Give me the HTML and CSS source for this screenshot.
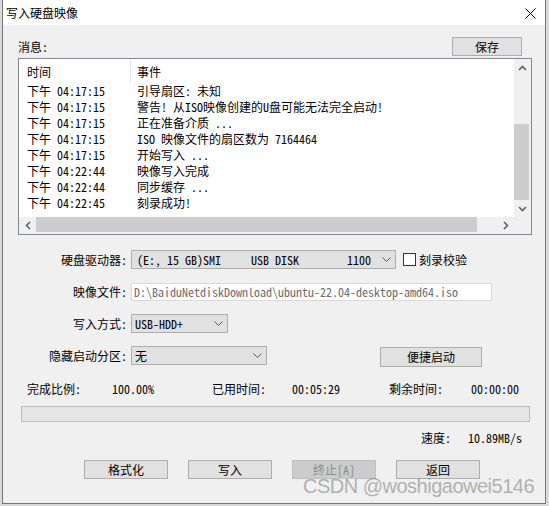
FILE: index.html
```html
<!DOCTYPE html>
<html lang="zh-CN">
<head>
<meta charset="utf-8">
<title>写入硬盘映像</title>
<link rel="stylesheet" href="styles.css">
</head>
<body>
<div class="window">
  <div class="titlebar">
    <span class="title">写入硬盘映像</span>
    <svg class="close" width="11" height="11" viewBox="0 0 11 11"><path d="M0.5 0.5 L10.5 10.5 M10.5 0.5 L0.5 10.5" stroke="#000" stroke-width="1" fill="none"/></svg>
  </div>

  <div class="msg-head">
    <span class="msg-label">消息<span class="m">:</span></span>
    <div class="btn save">保存</div>
  </div>

  <div class="listbox">
    <div class="list-view">
      <div class="list-header">
        <div class="col-time">时间</div>
        <div class="col-event">事件</div>
      </div>
      <div class="row"><div class="col-time">下午<span class="m"> 04:17:15</span></div><div class="col-event">引导扇区<span class="m">: </span>未知</div></div>
      <div class="row"><div class="col-time">下午<span class="m"> 04:17:15</span></div><div class="col-event">警告<span class="m">! </span>从<span class="m">ISO</span>映像创建的<span class="m">U</span>盘可能无法完全启动<span class="m">!</span></div></div>
      <div class="row"><div class="col-time">下午<span class="m"> 04:17:15</span></div><div class="col-event">正在准备介质<span class="m"> ...</span></div></div>
      <div class="row"><div class="col-time">下午<span class="m"> 04:17:15</span></div><div class="col-event"><span class="m">ISO </span>映像文件的扇区数为<span class="m"> 7164464</span></div></div>
      <div class="row"><div class="col-time">下午<span class="m"> 04:17:15</span></div><div class="col-event">开始写入<span class="m"> ...</span></div></div>
      <div class="row"><div class="col-time">下午<span class="m"> 04:22:44</span></div><div class="col-event">映像写入完成</div></div>
      <div class="row"><div class="col-time">下午<span class="m"> 04:22:44</span></div><div class="col-event">同步缓存<span class="m"> ...</span></div></div>
      <div class="row"><div class="col-time">下午<span class="m"> 04:22:45</span></div><div class="col-event">刻录成功<span class="m">!</span></div></div>
    </div>
    <div class="vscroll">
      <div class="sb-btn"><svg width="9" height="6" viewBox="0 0 9 6"><path d="M1 5 L4.5 1.5 L8 5" stroke="#606060" stroke-width="1.6" fill="none"/></svg></div>
      <div class="vtrack"><div class="vthumb"></div></div>
      <div class="sb-btn"><svg width="9" height="6" viewBox="0 0 9 6"><path d="M1 1 L4.5 4.5 L8 1" stroke="#606060" stroke-width="1.6" fill="none"/></svg></div>
    </div>
    <div class="hscroll">
      <div class="sb-btn"><svg width="6" height="9" viewBox="0 0 6 9"><path d="M5 1 L1.5 4.5 L5 8" stroke="#606060" stroke-width="1.6" fill="none"/></svg></div>
      <div class="htrack"><div class="hthumb"></div></div>
      <div class="sb-btn"><svg width="6" height="9" viewBox="0 0 6 9"><path d="M1 1 L4.5 4.5 L1 8" stroke="#606060" stroke-width="1.6" fill="none"/></svg></div>
    </div>
    <div class="corner"></div>
  </div>

  <div class="frow r1">
    <span class="flabel">硬盘驱动器<span class="m">:</span></span>
    <div class="select drive"><span class="m">(E:, 15 GB)SMI     USB DISK        1100</span><svg class="chev" width="9" height="5" viewBox="0 0 9 5"><path d="M0.5 0.5 L4.5 4.5 L8.5 0.5" stroke="#555" stroke-width="1" fill="none"/></svg></div>
    <span class="check"></span>
    <span class="check-label">刻录校验</span>
  </div>
  <div class="frow r2">
    <span class="flabel">映像文件<span class="m">:</span></span>
    <div class="input"><span class="m">D:\BaiduNetdiskDownload\ubuntu-22.04-desktop-amd64.iso</span></div>
  </div>
  <div class="frow r3">
    <span class="flabel">写入方式<span class="m">:</span></span>
    <div class="select mode"><span class="m">USB-HDD+</span><svg class="chev" width="9" height="5" viewBox="0 0 9 5"><path d="M0.5 0.5 L4.5 4.5 L8.5 0.5" stroke="#555" stroke-width="1" fill="none"/></svg></div>
  </div>
  <div class="frow r4">
    <span class="flabel">隐藏启动分区<span class="m">:</span></span>
    <div class="select hidden-part"><span>无</span><svg class="chev" width="9" height="5" viewBox="0 0 9 5"><path d="M0.5 0.5 L4.5 4.5 L8.5 0.5" stroke="#555" stroke-width="1" fill="none"/></svg></div>
    <div class="btn quick">便捷启动</div>
  </div>

  <div class="stats">
    <span class="s1">完成比例<span class="m">:</span></span>
    <span class="s2 m">100.00%</span>
    <span class="s3">已用时间<span class="m">:</span></span>
    <span class="s4 m">00:05:29</span>
    <span class="s5">剩余时间<span class="m">:</span></span>
    <span class="m">00:00:00</span>
  </div>

  <div class="progress"></div>

  <div class="speed">
    <span class="speed-label">速度<span class="m">:</span></span>
    <span class="m">10.89MB/s</span>
  </div>

  <div class="actions">
    <div class="btn act">格式化</div>
    <div class="btn act">写入</div>
    <div class="btn act disabled">终止<span class="m">[A]</span></div>
    <div class="btn act">返回</div>
  </div>

  <div class="watermark">CSDN @woshigaowei5146</div>
</div>
</body>
</html>
```

FILE: styles.css
```css
* { box-sizing: border-box; }
html, body { margin: 0; padding: 0; }
body {
  width: 549px;
  height: 506px;
  overflow: hidden;
  background: #dadada;
  font-family: "Noto Sans CJK SC", sans-serif;
  font-size: 12px;
  color: #000;
}
.m {
  font-family: "Noto Sans Mono CJK SC", "Noto Sans CJK SC", monospace;
  white-space: pre;
}
.window {
  position: relative;
  margin-left: 2px;
  width: 544px;
  height: 504px;
  background: #f0f0f0;
  border: 1px solid #767676;
  border-top: none;
}
.titlebar {
  height: 25px;
  background: #fff;
  display: flex;
  align-items: center;
  padding-left: 3px;
  padding-right: 9px;
}
.title { font-size: 12px; line-height: 16px; }
.close { margin-left: auto; align-self: flex-start; margin-top: 8px; }

.btn {
  background: #e1e1e1;
  border: 1px solid #adadad;
  display: flex;
  align-items: center;
  justify-content: center;
  line-height: 16px;
}
.msg-head {
  margin: 12px 0 0 15px;
  width: 504px;
  height: 19px;
  display: flex;
  align-items: center;
  justify-content: space-between;
}
.msg-label { line-height: 16px; margin-top: 1px; }
.save { width: 70px; height: 19px; }

.listbox {
  margin: 2px 0 0 15px;
  width: 514px;
  height: 177px;
  border: 1px solid #828790;
  background: #fff;
  display: grid;
  grid-template-columns: 495px 17px;
  grid-template-rows: 158px 17px;
}
.list-view { overflow: hidden; }
.list-header { display: flex; height: 24px; align-items: stretch; }
.list-header .col-time { border-right: 1px solid #e5e5e5; }
.list-header > div { display: flex; align-items: center; }
.col-time { width: 112px; padding-left: 8px; flex: none; white-space: nowrap; }
.col-event { padding-left: 6px; white-space: nowrap; }
.row { display: flex; height: 16px; line-height: 16px; }

.vscroll { background: #f0f0f0; display: flex; flex-direction: column; }
.sb-btn { width: 17px; height: 17px; display: flex; align-items: center; justify-content: center; flex: none; }
.vtrack { flex: 1; display: flex; flex-direction: column; justify-content: flex-end; }
.vthumb { height: 76px; margin: 0 2px 0 0; background: #cdcdcd; }
.hscroll { background: #f0f0f0; display: flex; }
.htrack { flex: 1; display: flex; }
.hthumb { width: 441px; margin: 0 0 2px 0; background: #cdcdcd; }
.corner { background: #f0f0f0; }

.frow { display: flex; align-items: center; }
.flabel { width: 124px; margin-right: 4px; text-align: right; line-height: 16px; }
.r1 { margin-top: 15px; height: 19px; }
.r2 { margin-top: 14px; height: 18px; }
.r3 { margin-top: 13px; height: 19px; }
.r4 { margin-top: 13px; height: 21px; align-items: flex-start; }
.r4 .flabel { margin-top: 2px; }

.select {
  height: 19px;
  background: #e1e1e1;
  border: 1px solid #adadad;
  display: flex;
  align-items: center;
  padding-left: 4px;
  padding-right: 4px;
  line-height: 16px;
}
.chev { margin-left: auto; flex: none; }
.drive { width: 265px; padding-left: 5px; }
.mode { width: 97px; padding-left: 3px; }
.hidden-part { width: 136px; padding-left: 3px; }
.check {
  width: 13px; height: 13px;
  border: 1px solid #333;
  background: #fff;
  margin-left: 7px;
  flex: none;
}
.check-label { margin-left: 3px; line-height: 16px; }
.input {
  width: 361px;
  height: 18px;
  background: #fff;
  border: 1px solid #d9d9d9;
  display: flex;
  align-items: center;
  padding-left: 2px;
  color: #6d6d6d;
  line-height: 16px;
}
.quick { width: 102px; height: 20px; margin-left: 113px; margin-top: 1px; }

.stats {
  margin-top: 14px;
  height: 16px;
  display: flex;
  align-items: center;
  padding-left: 24px;
  line-height: 16px;
}
.s1 { width: 85px; }
.s2 { width: 100px; }
.s3 { width: 80px; }
.s4 { width: 97px; }
.s5 { width: 82px; }

.progress {
  margin: 9px 0 0 18px;
  width: 509px;
  height: 16px;
  border: 1px solid #bcbcbc;
  background: #e6e6e6;
}
.speed {
  margin-top: 8px;
  height: 16px;
  display: flex;
  align-items: center;
  padding-left: 418px;
  line-height: 16px;
}
.speed-label { width: 47px; }

.actions {
  margin-top: 14px;
  display: flex;
  gap: 20px;
  padding-left: 81px;
}
.act { width: 84px; height: 19px; }
.disabled { background: #cccccc; border-color: #bfbfbf; color: #8b8b8b; }

.watermark {
  position: absolute;
  left: 300px;
  top: 476px;
  font-family: "Liberation Sans", Arial, sans-serif;
  font-size: 20px;
  line-height: 20px;
  letter-spacing: -0.5px;
  color: rgba(110, 110, 110, 0.5);
  white-space: nowrap;
}
```
